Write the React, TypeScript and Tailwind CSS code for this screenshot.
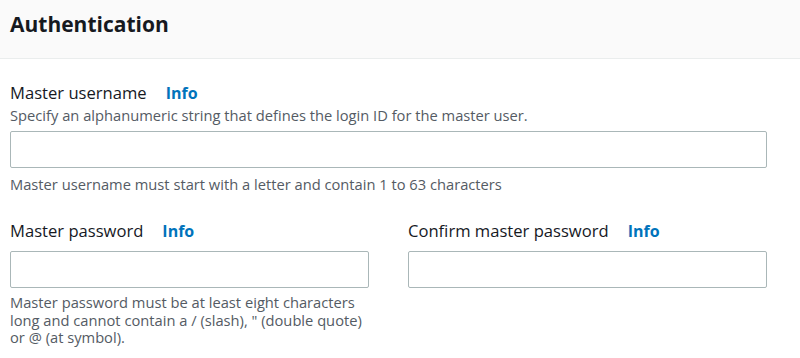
const FONT = { fontFamily: '"Open Sans", "Liberation Sans", sans-serif' };

type FieldLabelProps = {
  label: string;
};

function FieldLabel({ label }: FieldLabelProps) {
  return (
    <div className="flex items-baseline gap-[19px] text-[16.6px] leading-[20px] text-[#16191f]">
      <span>{label}</span>
      <a href="#" className="text-[16px] font-bold text-[#0073bb]">
        Info
      </a>
    </div>
  );
}

function TextInput() {
  return (
    <input
      type="text"
      className="block h-[37px] w-full rounded-[2px] border border-[#aab7b8] bg-white px-2 outline-none"
    />
  );
}

export default function App() {
  return (
    <div style={FONT} className="h-[358px] w-[800px] overflow-hidden bg-white">
      <div className="h-[59px] border-b border-[#eaeded] bg-[#fafafa] px-[10px] pt-[10px]">
        <h2 className="text-[21px] font-bold leading-[28px] text-[#16191f]">
          Authentication
        </h2>
      </div>

      <div className="pl-[10px] pr-[33px] pt-[24px]">
        <FieldLabel label="Master username" />
        <p className="mt-[3px] text-[14.7px] leading-[18px] text-[#545b64]">
          Specify an alphanumeric string that defines the login ID for the master user.
        </p>
        <div className="mt-[7px]">
          <TextInput />
        </div>
        <p className="mt-[7px] text-[14.7px] leading-[18px] text-[#545b64]">
          Master username must start with a letter and contain 1 to 63 characters
        </p>

        <div className="mt-[28px] grid grid-cols-2 gap-[39px]">
          <div>
            <FieldLabel label="Master password" />
            <div className="mt-[10px]">
              <TextInput />
            </div>
            <p className="mt-[6px] text-[14.7px] leading-[17.5px] text-[#545b64]">
              Master password must be at least eight characters long and cannot contain a /
              (slash), " (double quote) or @ (at symbol).
            </p>
          </div>
          <div>
            <FieldLabel label="Confirm master password" />
            <div className="mt-[10px]">
              <TextInput />
            </div>
          </div>
        </div>
      </div>
    </div>
  );
}
